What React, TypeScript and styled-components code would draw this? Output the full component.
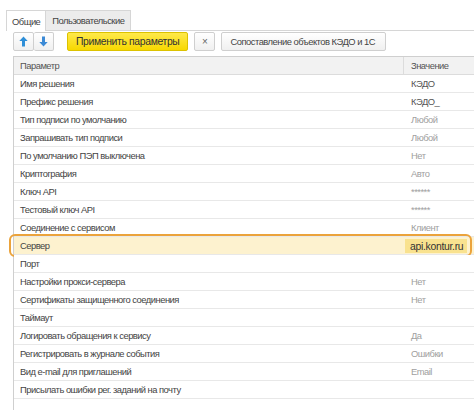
import React from "react";
import styled, { createGlobalStyle } from "styled-components";

const FONT = `"Liberation Sans", Arial, sans-serif`;

const Global = createGlobalStyle`
  html, body { margin: 0; padding: 0; background: #fff; }
  body { font-family: ${FONT}; font-size: 9.4px; letter-spacing: -0.5px; color: #444; }
`;

const Page = styled.div`
  width: 474px;
  height: 410px;
  overflow: hidden;
  padding-top: 10px;
  box-sizing: border-box;
`;

const TabBar = styled.div`
  display: flex;
  align-items: flex-end;
  margin-left: 6px;
  border-bottom: 1px solid #d6d6d6;
  height: 20px;
`;

const Tab = styled.div<{ $active?: boolean }>`
  display: flex;
  align-items: center;
  padding: 0 ${(p) => (p.$active ? 5 : 6)}px;
  height: ${(p) => (p.$active ? 21 : 20)}px;
  margin-bottom: ${(p) => (p.$active ? -1 : 0)}px;
  box-sizing: border-box;
  border: 1px solid #d6d6d6;
  border-bottom: none;
  background: ${(p) => (p.$active ? "#fff" : "#ececec")};
  color: #444;
  font-size: 9.4px;
  margin-left: ${(p) => (p.$active ? 0 : -1)}px;
  position: relative;
  z-index: ${(p) => (p.$active ? 1 : 0)};
`;

const Toolbar = styled.div`
  display: flex;
  align-items: center;
  margin: 1px 0 0 13px;
  height: 19px;
`;

const Group = styled.div`
  display: flex;
  margin-right: 13px;
`;

const Btn = styled.button<{ $w?: number }>`
  display: flex;
  align-items: center;
  justify-content: center;
  height: 19px;
  width: ${(p) => (p.$w ? `${p.$w}px` : "auto")};
  padding: ${(p) => (p.$w ? "0" : "0 10px 0 8px")};
  margin: 0 6px 0 0;
  border: 1px solid #cfcfcf;
  border-radius: 2px;
  background: linear-gradient(#ffffff, #f0f0f0);
  font-family: ${FONT};
  font-size: 9.4px;
  letter-spacing: -0.5px;
  color: #444;
  box-sizing: border-box;
  white-space: nowrap;
`;

const GroupBtn = styled(Btn)`
  margin: 0;
  width: 21px;
  padding: 0;
  & + & { margin-left: 0; border-left: none; width: 20px; }
`;

const YellowBtn = styled(Btn)`
  background: linear-gradient(#ffe94a, #f7d800);
  border-color: #dcc200;
  color: #333;
  padding: 0 8px;
  font-size: 10.4px;
  letter-spacing: -0.35px;
`;

const CloseBtn = styled(Btn)`
  font-size: 10px;
  letter-spacing: 0;
  color: #666;
`;

const Table = styled.div`
  margin: 5px 0 0 13px;
  border-left: 1px solid #cfcfcf;
  border-top: 1px solid #cfcfcf;
`;

const Row = styled.div<{ $head?: boolean; $sel?: boolean }>`
  position: relative;
  display: grid;
  grid-template-columns: 389px 1fr;
  height: 18px;
  box-sizing: border-box;
  border-bottom: 1px solid #e8e8e8;
  background: ${(p) => (p.$head ? "#f2f2f2" : p.$sel ? "#fdf2cf" : "#fff")};
  ${(p) => (p.$head ? "border-bottom-color: #dcdcdc;" : "")}
`;

const Cell = styled.div<{ $head?: boolean; $divider?: boolean }>`
  display: flex;
  align-items: center;
  padding-left: 6px;
  font-size: 9.4px;
  white-space: nowrap;
  color: ${(p) => (p.$head ? "#555" : "#444")};
  ${(p) => (p.$divider ? "border-left: 1px solid #dcdcdc; padding-left: 7px;" : "")}
`;

const Value = styled.div<{ $tone: "dark" | "light" }>`
  display: flex;
  align-items: center;
  padding-left: 8px;
  font-size: 9.4px;
  white-space: nowrap;
  color: ${(p) => (p.$tone === "dark" ? "#555" : "#a0a0a0")};
`;

const SelValue = styled.div`
  display: flex;
  align-items: center;
  margin: 2px 7px 1px 2px;
  padding-left: 5px;
  background: #f9e28f;
  color: #333;
  font-size: 10.4px;
  letter-spacing: -0.3px;
`;

const Ring = styled.div`
  position: absolute;
  left: -5px;
  right: 2px;
  top: -3px;
  bottom: -3px;
  border: 2.5px solid #eba33b;
  border-radius: 6px;
  pointer-events: none;
`;

const Arrow = ({ up }: { up?: boolean }) => (
  <svg width="9" height="11" viewBox="0 0 9 11" style={{ transform: up ? "none" : "rotate(180deg)" }}>
    <path d="M4.5 0.5 L8.7 5 L6 5 L6 10.5 L3 10.5 L3 5 L0.3 5 Z" fill={up ? "#2f8fd8" : "#3b8ad6"} />
  </svg>
);

type R = { name: string; value?: string; tone?: "dark" | "light"; sel?: boolean };

const rows: R[] = [
  { name: "Имя решения", value: "КЭДО", tone: "dark" },
  { name: "Префикс решения", value: "КЭДО_", tone: "dark" },
  { name: "Тип подписи по умолчанию", value: "Любой", tone: "light" },
  { name: "Запрашивать тип подписи", value: "Любой", tone: "light" },
  { name: "По умолчанию ПЭП выключена", value: "Нет", tone: "light" },
  { name: "Криптография", value: "Авто", tone: "light" },
  { name: "Ключ API", value: "******", tone: "light" },
  { name: "Тестовый ключ API", value: "******", tone: "light" },
  { name: "Соединение с сервисом", value: "Клиент", tone: "light" },
  { name: "Сервер", value: "api.kontur.ru", sel: true },
  { name: "Порт" },
  { name: "Настройки прокси-сервера", value: "Нет", tone: "light" },
  { name: "Сертификаты защищенного соединения", value: "Нет", tone: "light" },
  { name: "Таймаут" },
  { name: "Логировать обращения к сервису", value: "Да", tone: "light" },
  { name: "Регистрировать в журнале события", value: "Ошибки", tone: "light" },
  { name: "Вид e-mail для приглашений", value: "Email", tone: "light" },
  { name: "Присылать ошибки рег. заданий на почту" },
  { name: "" },
];

export default function App() {
  return (
    <Page>
      <Global />
      <TabBar>
        <Tab $active>Общие</Tab>
        <Tab>Пользовательские</Tab>
      </TabBar>
      <Toolbar>
        <Group>
          <GroupBtn><Arrow up /></GroupBtn>
          <GroupBtn><Arrow /></GroupBtn>
        </Group>
        <YellowBtn>Применить параметры</YellowBtn>
        <CloseBtn $w={21}>×</CloseBtn>
        <Btn>Сопоставление объектов КЭДО и 1С</Btn>
      </Toolbar>
      <Table>
        <Row $head>
          <Cell $head>Параметр</Cell>
          <Cell $head $divider>Значение</Cell>
        </Row>
        {rows.map((r, i) => (
          <Row key={i} $sel={r.sel}>
            <Cell>{r.name}</Cell>
            {r.sel ? (
              <SelValue>{r.value}</SelValue>
            ) : (
              <Value $tone={r.tone ?? "light"}>{r.value ?? ""}</Value>
            )}
            {r.sel && <Ring />}
          </Row>
        ))}
      </Table>
    </Page>
  );
}
